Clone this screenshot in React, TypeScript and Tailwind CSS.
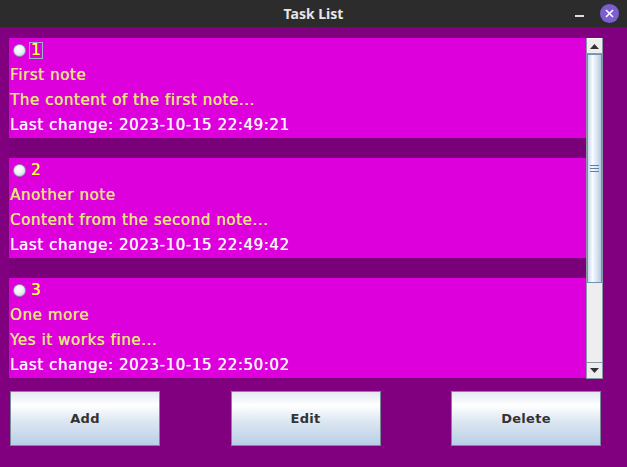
import React from "react"

type Note = { id: number; title: string; content: string; changed: string }

const notes: Note[] = [
  { id: 1, title: "First note", content: "The content of the first note...", changed: "2023-10-15 22:49:21" },
  { id: 2, title: "Another note", content: "Content from the second note...", changed: "2023-10-15 22:49:42" },
  { id: 3, title: "One more", content: "Yes it works fine...", changed: "2023-10-15 22:50:02" },
]

function Radio() {
  return (
    <span className="w-[13px] h-[13px] rounded-full border border-[#8a9aa6] bg-[radial-gradient(circle_at_45%_35%,#ffffff_0%,#eef2f8_45%,#b4c4d6_100%)]" />
  )
}

function NoteCard({ note, focused }: { note: Note; focused: boolean }) {
  return (
    <div className="h-[100px] shrink-0 bg-[#dd00dd] text-[15px] leading-none tracking-[0.6px] [text-shadow:0.35px_0_0_currentColor]">
      <div className="h-[25px] flex items-center pl-[4px] gap-[3px]">
        <Radio />
        <span
          className={`px-[1px] h-[17px] flex items-center text-[#ffff33] ${focused ? "border border-[#9ab4c8]" : "border border-transparent"}`}
        >
          {note.id}
        </span>
      </div>
      <div className="h-[25px] flex items-center pl-[1px] text-[#e8e47a]">{note.title}</div>
      <div className="h-[25px] flex items-center pl-[1px] text-[#e8e47a]">{note.content}</div>
      <div className="h-[25px] flex items-center pl-[1px] text-[#fbf4fb]">Last change: {note.changed}</div>
    </div>
  )
}

function ScrollBar() {
  return (
    <div className="w-[17px] flex flex-col bg-[#eeeeee] border border-[#8a9aa8] border-t-0">
      <div className="h-[16px] shrink-0 flex items-center justify-center bg-[#eeeeee] border-b border-[#8a9aa8] border-t border-t-white">
        <svg width="9" height="5" viewBox="0 0 9 5"><path d="M0 5 L4.5 0 L9 5 Z" fill="#333" /></svg>
      </div>
      <div className="h-[229px] shrink-0 border border-[#6f90b8] bg-[linear-gradient(to_right,#c8d8ea,#f8fbff_35%,#d6e3f1_70%,#b5cbe2)] flex items-center justify-center">
        <div className="flex flex-col gap-[2px]">
          <div className="w-[9px] h-[1px] bg-[#5a7fb0]" />
          <div className="w-[9px] h-[1px] bg-[#5a7fb0]" />
          <div className="w-[9px] h-[1px] bg-[#5a7fb0]" />
        </div>
      </div>
      <div className="flex-1" />
      <div className="h-[16px] shrink-0 flex items-center justify-center border-t border-[#8a9aa8]">
        <svg width="9" height="5" viewBox="0 0 9 5"><path d="M0 0 L4.5 5 L9 0 Z" fill="#333" /></svg>
      </div>
    </div>
  )
}

function JButton({ label }: { label: string }) {
  return (
    <button className="w-[150px] h-[55px] border border-[#7a8a99] bg-[linear-gradient(to_bottom,#e3e9f3_0%,#ffffff_25%,#dde7f2_55%,#b9cfe6_100%)] text-[13px] font-bold text-[#333333] tracking-[0.3px]">
      {label}
    </button>
  )
}

export default function App() {
  return (
    <div className="w-[627px] h-[467px] flex flex-col bg-[#800080] font-['DejaVu_Sans',sans-serif] overflow-hidden">
      <div className="h-[27px] shrink-0 bg-[#2c2c2c] relative flex items-center justify-center">
        <span className="text-[14px] font-bold text-[#e6e6e6] font-['Noto_Sans',sans-serif]">Task List</span>
        <span className="absolute left-[575px] top-[15px] w-[9px] h-[2px] bg-[#dddddd]" />
        <span className="absolute left-[600px] top-[4px] w-[19px] h-[19px] rounded-full bg-[#7b5fd0] flex items-center justify-center">
          <svg width="9" height="9" viewBox="0 0 9 9"><path d="M1 1 L8 8 M8 1 L1 8" stroke="#fff" strokeWidth="1.6" /></svg>
        </span>
      </div>
      <div className="flex pl-[9px] pt-[11px] h-[352px] shrink-0">
        <div className="w-[577px] h-[341px] flex flex-col gap-[20px] bg-[#7a007a] overflow-hidden">
          {notes.map((n, i) => (
            <NoteCard key={n.id} note={n} focused={i === 0} />
          ))}
        </div>
        <ScrollBar />
      </div>
      <div className="flex justify-between pl-[10px] pr-[26px] pt-[12px]">
        <JButton label="Add" />
        <JButton label="Edit" />
        <JButton label="Delete" />
      </div>
    </div>
  )
}
